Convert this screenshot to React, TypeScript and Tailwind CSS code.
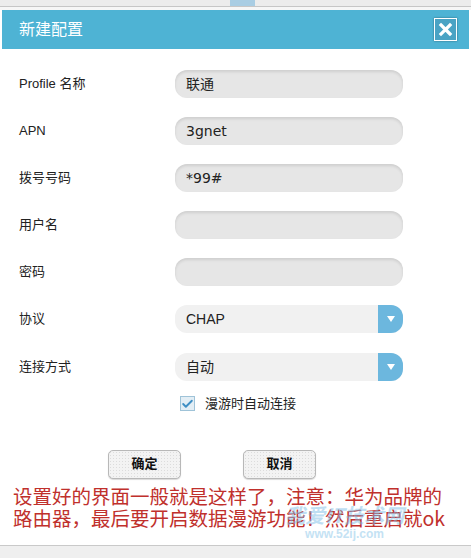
import { Check } from 'lucide-react'

const labelFont = 'font-["Liberation_Sans","Noto_Sans_CJK_SC",sans-serif]'

function TextInput({ value }: { value?: string }) {
  return (
    <div className="w-[228px] h-[28px] rounded-[12px] bg-[#e6e6e6] shadow-[inset_0_2px_3px_rgba(0,0,0,0.10)] flex items-center pl-[11px] text-[14px] text-[#222] font-['DejaVu_Sans','Noto_Sans_CJK_SC',sans-serif]">
      {value}
    </div>
  )
}

function Select({ value }: { value: string }) {
  return (
    <div className="w-[228px] h-[28px] rounded-[12px] bg-[#f1f1f1] flex items-center overflow-hidden">
      <span className={`flex-1 pl-[11px] text-[14px] text-[#222] ${labelFont}`}>{value}</span>
      <div className="w-[25px] h-full bg-[#6cb7de] flex items-center justify-center">
        <div className="w-0 h-0 border-l-[4px] border-r-[4px] border-t-[6px] border-l-transparent border-r-transparent border-t-white" />
      </div>
    </div>
  )
}

function Row({ label, children }: { label: string; children: React.ReactNode }) {
  return (
    <div className="flex items-center h-[28px]">
      <div className={`w-[175px] pl-[19px] text-[13px] text-[#222] ${labelFont}`}>{label}</div>
      {children}
    </div>
  )
}

export default function App() {
  return (
    <div className="relative w-[471px] h-[558px] bg-white overflow-hidden flex flex-col">
      {/* strip of the page behind the dialog */}
      <div className="h-[7px] bg-[#ececec] border-b border-[#c6c6c6] relative overflow-hidden">
        <div className="absolute left-[37px] top-[-4px] w-[26px] h-[4px] border-b-2 border-[#555]" />
        <div className="absolute left-[230px] top-0 w-[25px] h-[6px] bg-[#a9cde3]" />
      </div>
      <div className="h-[3px] bg-[#f6f6f6]" />

      <div className="mx-[2px] h-[39px] bg-[#4eb3d4] flex items-center justify-between pl-[17px] pr-[12px]">
        <span className={`text-white text-[16px] ${labelFont}`}>新建配置</span>
        <div className="w-[23px] h-[23px] border border-white bg-[#4aa3c4] flex items-center justify-center shadow-[0_0_2px_rgba(0,0,0,0.4)]">
          <svg width="15" height="15" viewBox="0 0 15 15">
            <path d="M3 3 L12 12 M12 3 L3 12" stroke="white" strokeWidth="3.2" strokeLinecap="square" />
          </svg>
        </div>
      </div>

      <div className="flex flex-col pt-[21px] gap-[19px]">
        <Row label="Profile 名称"><TextInput value="联通" /></Row>
        <Row label="APN"><TextInput value="3gnet" /></Row>
        <Row label="拨号号码"><TextInput value="*99#" /></Row>
        <Row label="用户名"><TextInput /></Row>
        <Row label="密码"><TextInput /></Row>
        <Row label="协议"><Select value="CHAP" /></Row>
        <div className="mt-[1px]">
          <Row label="连接方式"><Select value="自动" /></Row>
        </div>
      </div>

      <div className="flex items-center pl-[180px] mt-[13px] gap-[10px]">
        <div className="w-[15px] h-[15px] border border-[#9fc3d8] bg-[#e3eef5] flex items-center justify-center">
          <Check className="w-[14px] h-[14px] text-[#3f8fc4]" strokeWidth={3.5} />
        </div>
        <span className={`text-[13px] text-[#222] ${labelFont}`}>漫游时自动连接</span>
      </div>

      <div className="flex pl-[108px] gap-[62px] mt-[36px]">
        <button className={`w-[73px] h-[29px] rounded-[5px] border border-[#b8b8b8] bg-[#f3f3f3] bg-[radial-gradient(#dcdcdc_1px,transparent_1px)] bg-[length:3px_3px] shadow-[0_1px_1px_rgba(0,0,0,0.15)] text-[13px] font-bold text-[#111] ${labelFont}`}>
          确定
        </button>
        <button className={`w-[73px] h-[29px] rounded-[5px] border border-[#b8b8b8] bg-[#f3f3f3] bg-[radial-gradient(#dcdcdc_1px,transparent_1px)] bg-[length:3px_3px] shadow-[0_1px_1px_rgba(0,0,0,0.15)] text-[13px] font-bold text-[#111] ${labelFont}`}>
          取消
        </button>
      </div>

      <div className="mt-[6px] pl-[13px] pr-[10px] text-[19.5px] leading-[22px] text-[#c0302c] font-['Noto_Sans_CJK_SC',sans-serif]">
        <p className="whitespace-nowrap">设置好的界面一般就是这样了，注意：华为品牌的</p>
        <p className="whitespace-nowrap">路由器，最后要开启数据漫游功能！然后重启就ok</p>
      </div>

      <div className="absolute left-0 right-0 top-[545px] bottom-0 border-t border-[#c9c9c9] bg-[#efefef]" />

      {/* watermark */}
      <div className="absolute left-[285px] top-[503px] flex flex-col items-center opacity-50 pointer-events-none">
        <span className="text-[20px] font-bold italic text-[#7fc0e8] font-['Noto_Sans_CJK_SC',sans-serif] leading-[24px]">我爱IT技术网</span>
        <span className="text-[12px] font-bold text-[#8ac6ea] font-['Liberation_Sans',sans-serif] leading-[14px]">www.52ij.com</span>
      </div>
    </div>
  )
}
